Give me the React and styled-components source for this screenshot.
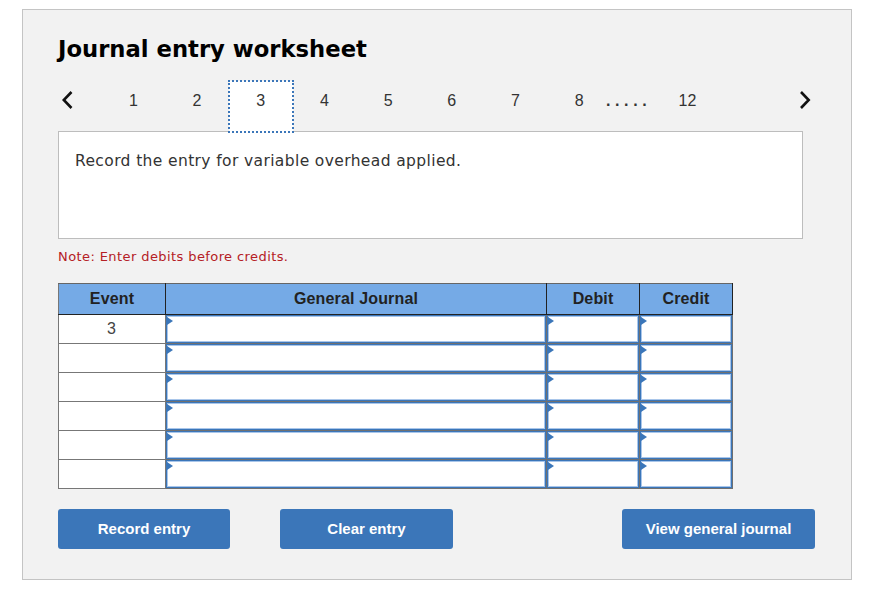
import React from "react";
import styled, { createGlobalStyle } from "styled-components";

const Global = createGlobalStyle`
  html, body { margin: 0; padding: 0; background: #fff; }
  body { font-family: "DejaVu Sans", sans-serif; }
`;

const Page = styled.div`
  width: 871px;
  height: 600px;
  padding: 9px 0 0 22px;
  box-sizing: border-box;
  overflow: hidden;
`;

const Panel = styled.section`
  width: 830px;
  height: 571px;
  box-sizing: border-box;
  border: 1px solid #c4c4c4;
  background: #f2f2f2;
  padding: 22px 35px 0;
`;

const Title = styled.h1`
  margin: 0;
  font: bold 22.7px/34px "DejaVu Sans", sans-serif;
  color: #000;
`;

const Stepper = styled.nav`
  display: flex;
  align-items: flex-start;
  height: 53px;
  margin-top: 14px;
  position: relative;
  z-index: 1;
  width: 757px;
`;

const Arrow = styled.button`
  width: 20px;
  height: 40px;
  padding: 0;
  border: 0;
  background: none;
  display: flex;
  align-items: center;
  justify-content: center;
`;

const Tabs = styled.div`
  display: flex;
  width: 588px;
  margin-left: 23.5px;
  flex: none;
`;

const Tab = styled.div`
  width: 63.7px;
  height: 51px;
  margin-top: 1px;
  flex: none;
  box-sizing: border-box;
  text-align: center;
  font: 16px/40px "Liberation Sans", sans-serif;
  color: #333;
  ${(p) => p.$active && `
    background: #fff;
    outline: 2px dotted #3b76b9;
    outline-offset: -1px;
  `}
`;

const Dots = styled.div`
  font: bold 16px/41px "Liberation Sans", sans-serif;
  color: #333;
  letter-spacing: 4.6px;
  width: 53px;
  margin-left: -5px;
  flex: none;
  white-space: nowrap;
`;

const Last = styled.div`
  font: 16px/42px "Liberation Sans", sans-serif;
  color: #333;
  width: 30px;
  text-align: center;
  flex: none;
  margin-left: 13.5px;
`;

const Spacer = styled.div`
  flex: 1;
`;

const Prompt = styled.div`
  width: 745px;
  height: 108px;
  box-sizing: border-box;
  margin-top: -2px;
  border: 1px solid #bdbdbd;
  background: #fff;
  padding: 18px 16px;
  font: 15.5px/22px "DejaVu Sans", sans-serif;
  letter-spacing: 0.38px;
  color: #333;
`;

const Note = styled.p`
  margin: 9px 0 0;
  font: 13px/18px "DejaVu Sans", sans-serif;
  letter-spacing: 0.41px;
  color: #b52025;
`;

const Table = styled.table`
  margin-top: 17px;
  border-collapse: collapse;
  table-layout: fixed;
  width: 674px;
`;

const Head = styled.th`
  height: 30px;
  padding: 0;
  box-sizing: border-box;
  background: #75aae6;
  border: 1px solid #222;
  border-top-color: #666;
  border-left-color: ${(p) => (p.$first ? "#777" : "#222")};
  font: bold 16px/30px "Liberation Sans", sans-serif;
  letter-spacing: 0.15px;
  color: #222;
`;

const EventCell = styled.td`
  height: 29px;
  padding: 0 1px 0 0;
  box-sizing: border-box;
  background: #fff;
  border: 1px solid #777;
  text-align: center;
  font: 16px/26px "Liberation Sans", sans-serif;
  color: #444;
`;

const EntryCell = styled.td`
  height: 29px;
  padding: 0;
  background: #fff;
  border: 1px solid #707070;
  position: relative;
  box-sizing: border-box;
  box-shadow: inset 0 0 0 1px #3b76b9, inset 0 0 0 2px #a9c6ea;

  &::before {
    content: "";
    position: absolute;
    left: 1px;
    top: 2px;
    border-left: 6px solid #3b76b9;
    border-top: 4.5px solid transparent;
    border-bottom: 4.5px solid transparent;
  }
`;

const Actions = styled.div`
  display: flex;
  margin-top: 20px;
`;

const Action = styled.button`
  height: 40px;
  width: ${(p) => p.$w}px;
  margin-left: ${(p) => p.$gap || 0}px;
  border: 0;
  padding: 0;
  border-radius: 3px;
  background: #3b76b9;
  color: #fff;
  font: bold 15px/40px "Liberation Sans", sans-serif;
`;

const Chevron = ({ dir }) => (
  <svg width="14" height="20" viewBox="0 0 14 20" fill="none">
    <path
      d={dir === "left" ? "M10.5 2 2.8 10l7.7 8" : "M3 2l7.7 8L3 18"}
      stroke="#111"
      strokeWidth="2.6"
    />
  </svg>
);

export default function App() {
  const rows = [0, 1, 2, 3, 4, 5];
  return (
    <Page>
      <Global />
      <Panel>
        <Title>Journal entry worksheet</Title>
        <Stepper>
          <Arrow aria-label="Previous"><Chevron dir="left" /></Arrow>
          <Tabs>
            {[1, 2, 3, 4, 5, 6, 7, 8].map((n) => (
              <Tab key={n} $active={n === 3}>{n}</Tab>
            ))}
            <Dots>.....</Dots>
            <Last>12</Last>
          </Tabs>
          <Spacer />
          <Arrow aria-label="Next"><Chevron dir="right" /></Arrow>
        </Stepper>
        <Prompt>Record the entry for variable overhead applied.</Prompt>
        <Note>Note: Enter debits before credits.</Note>
        <Table>
          <colgroup>
            <col width="107" />
            <col width="381" />
            <col width="93" />
            <col width="93" />
          </colgroup>
          <thead>
            <tr>
              <Head $first>Event</Head>
              <Head>General Journal</Head>
              <Head>Debit</Head>
              <Head>Credit</Head>
            </tr>
          </thead>
          <tbody>
            {rows.map((r) => (
              <tr key={r}>
                <EventCell>{r === 0 ? "3" : ""}</EventCell>
                <EntryCell />
                <EntryCell />
                <EntryCell />
              </tr>
            ))}
          </tbody>
        </Table>
        <Actions>
          <Action $w={172}>Record entry</Action>
          <Action $w={173} $gap={50}>Clear entry</Action>
          <Action $w={193} $gap={169}>View general journal</Action>
        </Actions>
      </Panel>
    </Page>
  );
}
